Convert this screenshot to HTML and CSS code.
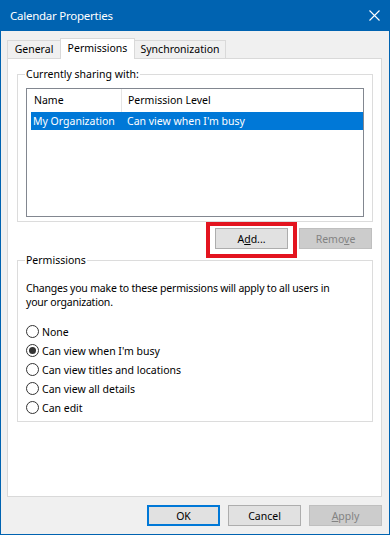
FILE: index.html
```html
<!DOCTYPE html>
<html>
<head>
<meta charset="utf-8">
<link rel="stylesheet" href="styles.css">
</head>
<body>
<div class="window">
  <div class="titlebar">
    <span class="title">Calendar Properties</span>
    <svg class="close" width="11" height="11" viewBox="0 0 11 11"><path d="M0.5 0.5 L10.5 10.5 M10.5 0.5 L0.5 10.5" stroke="#fff" stroke-width="1.1" fill="none"/></svg>
  </div>
  <div class="client">
    <div class="tabs">
      <div class="tab tab-general">General</div>
      <div class="tab tab-active">Permissions</div>
      <div class="tab tab-sync">Synchronization</div>
    </div>
    <div class="panel">
      <fieldset class="group group-share">
        <legend>Currently sharing with:</legend>
        <div class="list">
          <div class="list-head">
            <div class="hcol hcol1">Name</div>
            <div class="hcol hcol2">Permission Level</div>
          </div>
          <div class="list-row selected">
            <div class="rcol rcol1">My Organization</div>
            <div class="rcol rcol2">Can view when I'm busy</div>
          </div>
        </div>
      </fieldset>
      <div class="list-buttons">
        <div class="highlight-wrap">
          <button class="btn">A<u>d</u>d...</button>
          <span class="highlight"></span>
        </div>
        <button class="btn btn-disabled">Remo<u>v</u>e</button>
      </div>
      <fieldset class="group group-perms">
        <legend>Permissions</legend>
        <p class="note">Changes you make to these permissions will apply to all users in<br>your organization.</p>
        <div class="radios">
          <div class="radio-row"><span class="radio"></span><span>None</span></div>
          <div class="radio-row"><span class="radio checked"></span><span>Can view when I'm busy</span></div>
          <div class="radio-row"><span class="radio"></span><span>Can view titles and locations</span></div>
          <div class="radio-row"><span class="radio"></span><span>Can view all details</span></div>
          <div class="radio-row"><span class="radio"></span><span>Can edit</span></div>
        </div>
      </fieldset>
    </div>
    <div class="footer">
      <button class="btn btn-default">OK</button>
      <button class="btn">Cancel</button>
      <button class="btn btn-disabled"><u>A</u>pply</button>
    </div>
  </div>
</div>
</body>
</html>
```
FILE: styles.css
```css
* { box-sizing: border-box; margin: 0; padding: 0; }
html, body { width: 390px; height: 535px; overflow: hidden; }
body {
  font-family: "Noto Sans", "Open Sans", sans-serif;
  font-size: 10.5px;
  color: #000;
  background: #fff;
}
.window {
  width: 390px;
  height: 535px;
  border: 1px solid #0063B1;
  border-top: 0;
  background: #F0F0F0;
  display: flex;
  flex-direction: column;
}
.titlebar {
  height: 31px;
  flex: none;
  background: #0063B1;
  color: #fff;
  display: flex;
  align-items: center;
  justify-content: space-between;
  padding: 0 9px 0 9px;
}
.title { font-size: 11.5px; line-height: 16px; letter-spacing: -0.25px; }
.close { display: block; }
.client {
  flex: 1;
  display: flex;
  flex-direction: column;
  padding: 7px 7px 0 6px;
}
.tabs {
  display: flex;
  align-items: flex-end;
  height: 20px;
  flex: none;
}
.tab {
  height: 18px;
  line-height: 17px;
  text-align: center;
  background: #F0F0F0;
  border: 1px solid #D9D9D9;
  border-bottom: 0;
  white-space: nowrap;
}
.tab-general { width: 53px; border-right: 0; }
.tab-sync { width: 91px; border-left: 0; }
.tab-active {
  width: 75px;
  height: 21px;
  line-height: 18px;
  background: #fff;
  margin-bottom: -1px;
  position: relative;
  z-index: 1;
}
.panel {
  height: 439px;
  flex: none;
  background: #fff;
  border: 1px solid #D9D9D9;
  padding: 0 8px 0 9px;
}
.group {
  border: 1px solid #DCDCDC;
  padding: 7px 8px 4px;
  min-width: 0;
}
.group legend {
  line-height: 14px;
  padding: 0 1px;
  margin-left: -1px;
  white-space: nowrap;
}
.group-share { margin-top: 8px; }
.list {
  height: 129px;
  border: 1px solid #828790;
  background: #fff;
}
.list-head {
  display: flex;
  height: 23px;
}
.hcol { line-height: 23px; white-space: nowrap; }
.hcol1 { width: 95px; padding-left: 7px; border-right: 1px solid #E5E5E5; }
.hcol2 { padding-left: 6px; }
.list-row {
  display: flex;
  height: 18px;
  margin-left: 4px;
}
.list-row.selected { background: #0078D7; color: #fff; }
.rcol { line-height: 18px; white-space: nowrap; }
.rcol1 { width: 90px; padding-left: 2px; }
.rcol2 { padding-left: 6px; }
.list-buttons {
  display: flex;
  justify-content: flex-end;
  gap: 11px;
  margin-top: 6px;
  margin-right: 1px;
}
.btn {
  width: 73px;
  height: 21px;
  font: inherit;
  color: #000;
  background: #E1E1E1;
  border: 1px solid #ADADAD;
  line-height: 18px;
  text-align: center;
}
.btn u { text-underline-offset: 1px; }
.btn-disabled {
  background: #CCCCCC;
  border-color: #BFBFBF;
  color: #838383;
}
.btn-default {
  border-color: #0078D7;
  box-shadow: inset 0 0 0 1px #0078D7;
}
.highlight-wrap { position: relative; display: flex; }
.highlight {
  position: absolute;
  left: -9px;
  right: -9px;
  top: -6px;
  bottom: -9px;
  border: 4px solid #E3141F;
  pointer-events: none;
}
.group-perms { margin-top: 4px; padding-top: 14px; }
.note { line-height: 14px; white-space: nowrap; letter-spacing: -0.2px; }
.radios { margin-top: 13px; }
.radio-row {
  display: flex;
  align-items: center;
  height: 19px;
  gap: 3px;
  white-space: nowrap;
}
.radio {
  width: 13px;
  height: 13px;
  border: 1px solid #333;
  border-radius: 50%;
  background: #fff;
  display: flex;
  align-items: center;
  justify-content: center;
  flex: none;
}
.radio.checked::after {
  content: "";
  width: 7px;
  height: 7px;
  border-radius: 50%;
  background: #333;
}
.footer {
  display: flex;
  justify-content: flex-end;
  gap: 8px;
  margin-top: 8px;
}
```
